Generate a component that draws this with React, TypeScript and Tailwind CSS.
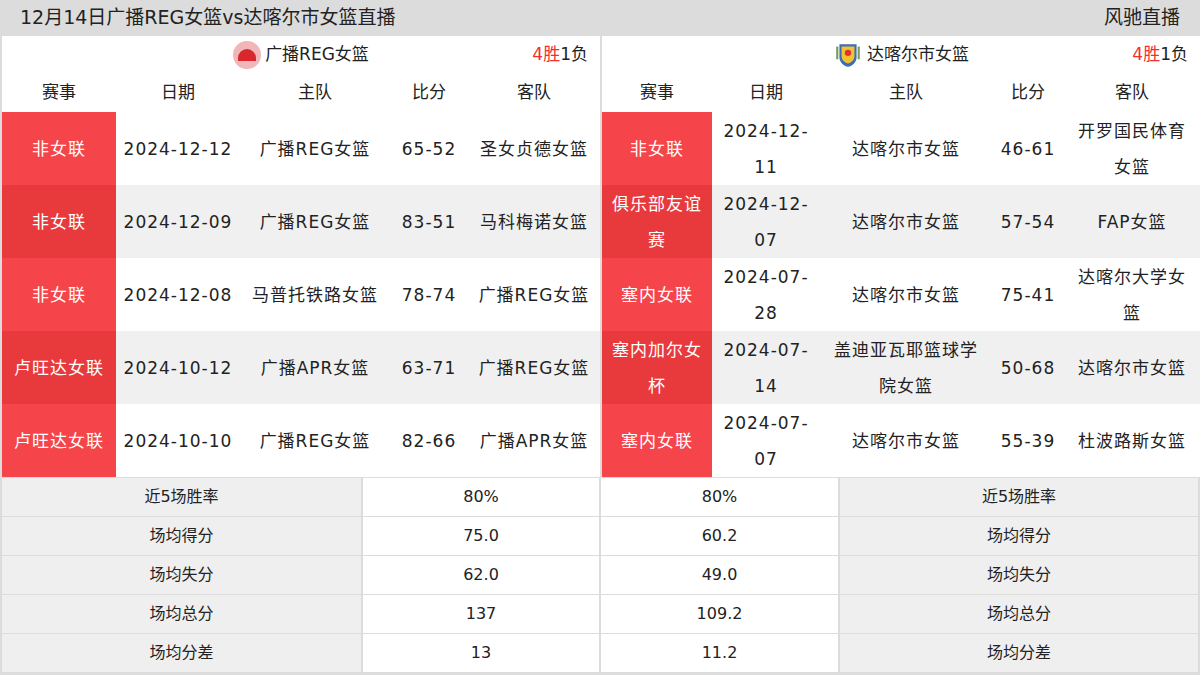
import React from "react";

type Row = [string, string, string, string, string];

const left: Row[] = [
  ["非女联", "2024-12-12", "广播REG女篮", "65-52", "圣女贞德女篮"],
  ["非女联", "2024-12-09", "广播REG女篮", "83-51", "马科梅诺女篮"],
  ["非女联", "2024-12-08", "马普托铁路女篮", "78-74", "广播REG女篮"],
  ["卢旺达女联", "2024-10-12", "广播APR女篮", "63-71", "广播REG女篮"],
  ["卢旺达女联", "2024-10-10", "广播REG女篮", "82-66", "广播APR女篮"],
];
const right: Row[] = [
  ["非女联", "2024-12-11", "达喀尔市女篮", "46-61", "开罗国民体育女篮"],
  ["俱乐部友谊赛", "2024-12-07", "达喀尔市女篮", "57-54", "FAP女篮"],
  ["塞内女联", "2024-07-28", "达喀尔市女篮", "75-41", "达喀尔大学女篮"],
  ["塞内加尔女杯", "2024-07-14", "盖迪亚瓦耶篮球学院女篮", "50-68", "达喀尔市女篮"],
  ["塞内女联", "2024-07-07", "达喀尔市女篮", "55-39", "杜波路斯女篮"],
];
const stats: [string, string, string][] = [
  ["近5场胜率", "80%", "80%"],
  ["场均得分", "75.0", "60.2"],
  ["场均失分", "62.0", "49.0"],
  ["场均总分", "137", "109.2"],
  ["场均分差", "13", "11.2"],
];

function Panel({ name, logo, rows, cols }: { name: string; logo: React.ReactNode; rows: Row[]; cols: string[] }) {
  return (
    <div className="flex w-[598px] flex-col">
      <div className="relative flex h-[38px] items-center justify-center gap-1 bg-white text-[17px]">
        {logo}
        <span>{name}</span>
        <span className="absolute right-3">
          <span className="text-[#f32e2e]">4胜</span>1负
        </span>
      </div>
      <div className="flex h-[38px] items-center bg-white text-[17px]">
        {["赛事", "日期", "主队", "比分", "客队"].map((h, i) => (
          <div key={h} className={`${cols[i]} text-center`}>{h}</div>
        ))}
      </div>
      {rows.map((r, ri) => (
        <div key={ri} className={`flex h-[73px] items-stretch text-[17px] leading-[36px] ${ri % 2 ? "bg-[#f0f0f0]" : "bg-white"}`}>
          {r.map((c, i) => (
            <div
              key={i}
              className={`${cols[i]} flex items-center justify-center px-[6px] text-center tracking-[1px] ${
                i === 0 ? (ri % 2 ? "bg-[#e8393d] text-white" : "bg-[#f5444a] text-white") : ""
              }`}
            >
              <span className="break-all">{c}</span>
            </div>
          ))}
        </div>
      ))}
    </div>
  );
}

export default function App() {
  const leftCols = ["w-[114px]", "w-[124px]", "w-[150px]", "w-[78px]", "w-[132px]"];
  const rightCols = ["w-[110px]", "w-[108px]", "w-[172px]", "w-[72px]", "w-[136px]"];
  return (
    <div className="h-[675px] w-[1200px] overflow-hidden bg-[#dcdcdc] text-[#222]" style={{ fontFamily: '"DejaVu Sans", "Noto Sans CJK SC", sans-serif' }}>
      <div className="flex h-[35px] items-center justify-between px-5 text-[19px]">
        <span>12月14日广播REG女篮vs达喀尔市女篮直播</span>
        <span>风驰直播</span>
      </div>
      <div className="flex gap-[2px] px-[2px] pt-[1px]">
        <Panel
          name="广播REG女篮"
          rows={left}
          cols={leftCols}
          logo={
            <span className="flex h-[28px] w-[28px] items-center justify-center rounded-full bg-[#f0b6b8]">
              <span className="h-[12px] w-[18px] rounded-t-full bg-[#d9272e]" />
            </span>
          }
        />
        <Panel
          name="达喀尔市女篮"
          rows={right}
          cols={rightCols}
          logo={
            <svg width="30" height="30" viewBox="0 0 28 28">
              <path d="M6 4h16v12c0 5-4 8-8 9-4-1-8-4-8-9z" fill="#3b6fb5" />
              <path d="M8 6h12v9c0 4-3 6-6 7-3-1-6-3-6-7z" fill="#f2c230" />
              <circle cx="14" cy="12" r="3" fill="#d33" />
              <path d="M4 6v12M24 6v12" stroke="#7a9a5a" strokeWidth="2" />
            </svg>
          }
        />
      </div>
      <div className="mt-[1px] flex flex-col gap-[1px] px-[2px] text-[16px]">
        {stats.map(([l, a, b]) => (
          <div key={l} className="flex h-[38px] gap-[2px]">
            <div className="flex w-[359px] items-center justify-center bg-[#efefef]">{l}</div>
            <div className="flex w-[236px] items-center justify-center bg-white">{a}</div>
            <div className="flex w-[237px] items-center justify-center bg-white">{b}</div>
            <div className="flex flex-1 items-center justify-center bg-[#efefef]">{l}</div>
          </div>
        ))}
      </div>
    </div>
  );
}
